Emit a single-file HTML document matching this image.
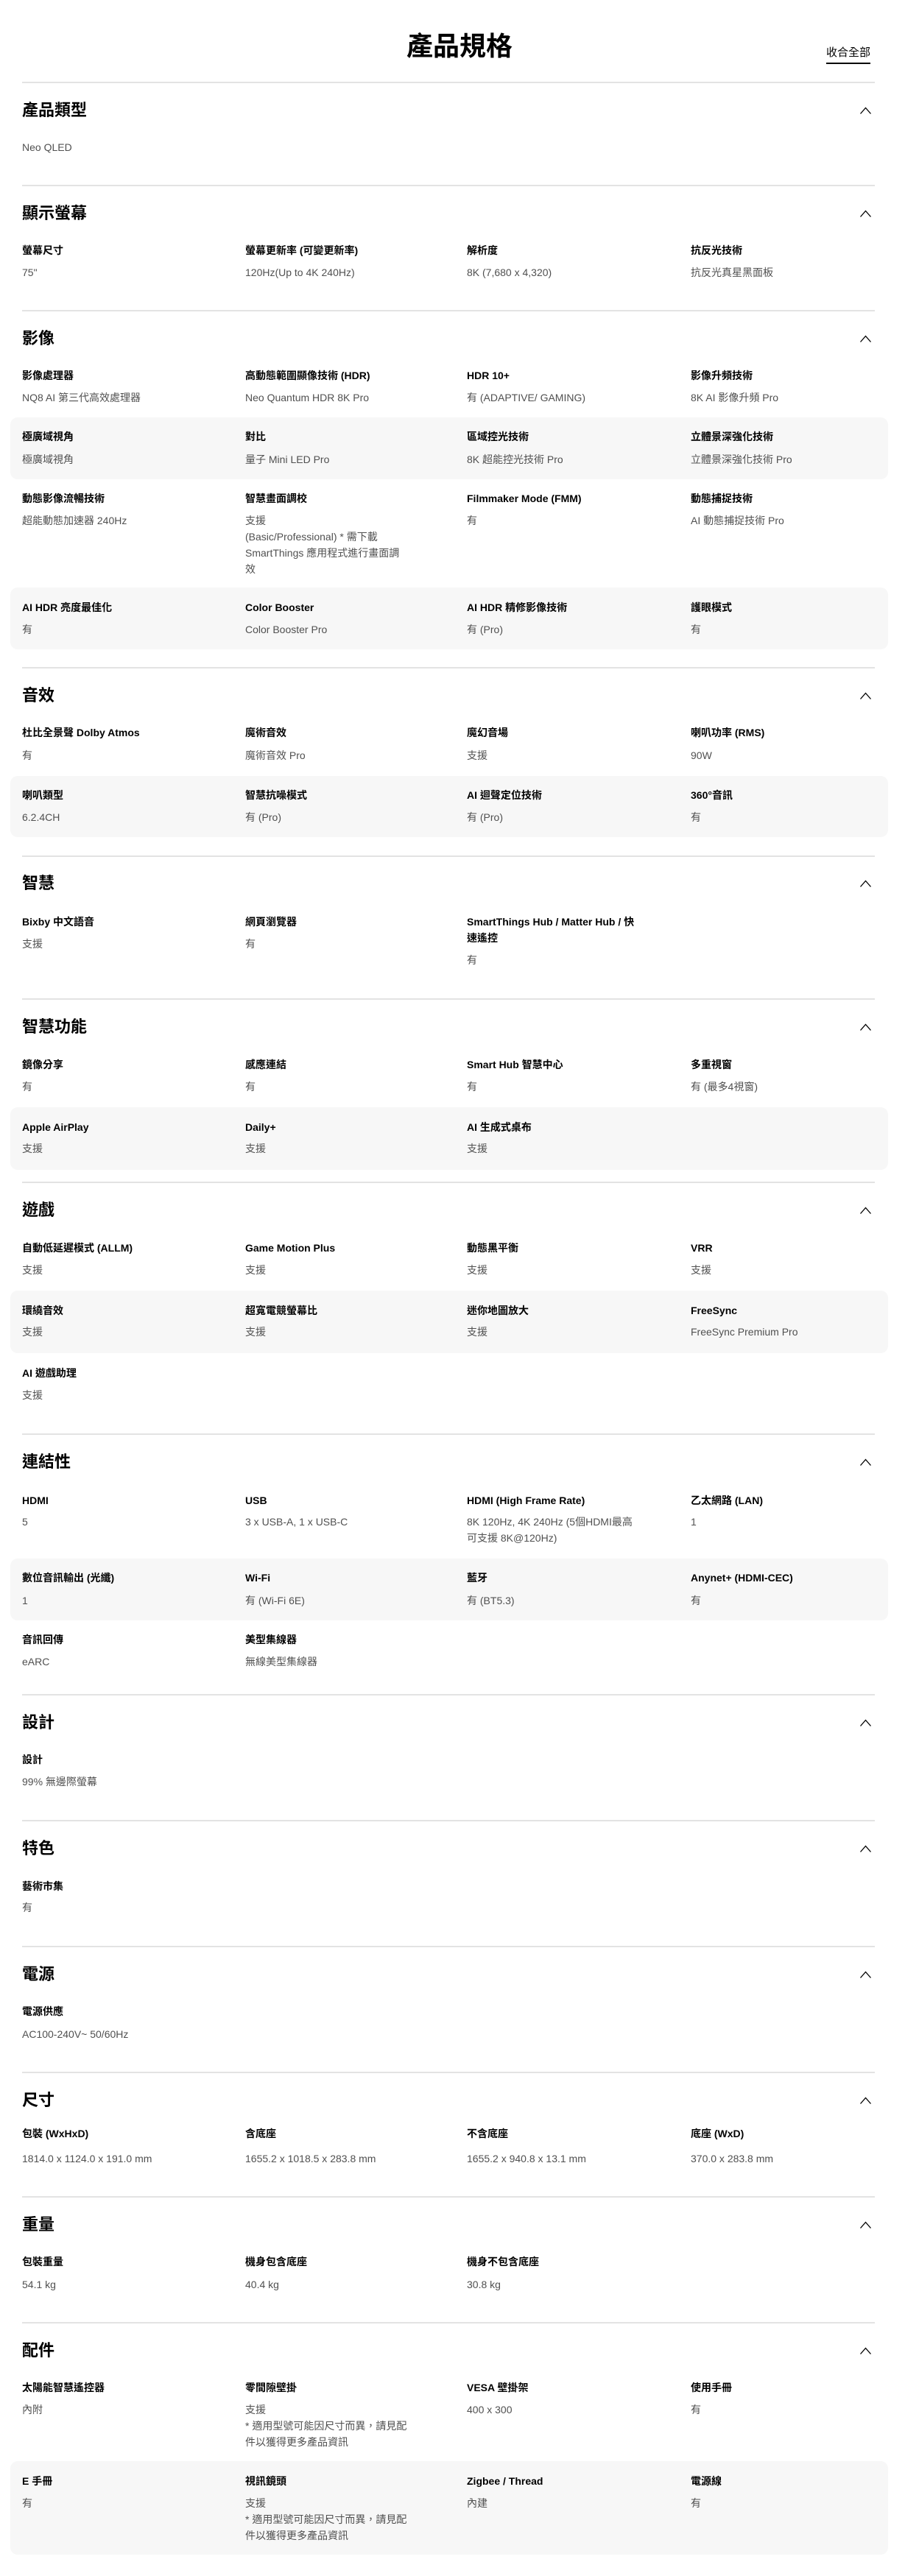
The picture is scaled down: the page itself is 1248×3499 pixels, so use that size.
<!DOCTYPE html>
<html><head><meta charset="utf-8">
<style>
*{margin:0;padding:0;box-sizing:border-box}
html,body{width:1248px;height:3499px;background:#fff;overflow:hidden}
body{position:relative;font-family:"Liberation Sans","Noto Sans CJK TC",sans-serif;color:#000}
div{position:absolute;white-space:nowrap}
.t{left:0;width:1248px;text-align:center;top:40px;font-size:36px;font-weight:700;line-height:46px}
.ca{left:1122px;top:61px;font-size:15px;line-height:22px;border-bottom:2px solid #000;padding-bottom:2px}
.d{left:30px;width:1158px;height:2px;background:#e3e3e3}
.h{left:30px;font-size:22px;font-weight:700;line-height:32px}
.c{left:1167px;width:17px;height:12px}
.g{left:14px;width:1192px;background:#f7f7f7;border-radius:10px}
.l{font-size:14px;font-weight:700;line-height:22px;color:#000}
.v{font-size:14px;line-height:22px;color:#505050}
.x1{left:30px}.x2{left:333px}.x3{left:634px}.x4{left:938px}
</style></head><body>
<div class="t">產品規格</div>
<div class="ca">收合全部</div>

<div class="g" style="top:567px;height:84px"></div>
<div class="g" style="top:798px;height:84px"></div>
<div class="g" style="top:1054px;height:83px"></div>
<div class="g" style="top:1504px;height:85px"></div>
<div class="g" style="top:1753px;height:85px"></div>
<div class="g" style="top:2117px;height:84px"></div>
<div class="g" style="top:3343px;height:127px"></div>

<div class="d" style="top:111px"></div>
<div class="d" style="top:251px"></div>
<div class="d" style="top:421px"></div>
<div class="d" style="top:906px"></div>
<div class="d" style="top:1162px"></div>
<div class="d" style="top:1356px"></div>
<div class="d" style="top:1605px"></div>
<div class="d" style="top:1947px"></div>
<div class="d" style="top:2301px"></div>
<div class="d" style="top:2472px"></div>
<div class="d" style="top:2643px"></div>
<div class="d" style="top:2814px"></div>
<div class="d" style="top:2983px"></div>
<div class="d" style="top:3154px"></div>

<div class="h" style="top:134px">產品類型</div>
<div class="h" style="top:274px">顯示螢幕</div>
<div class="h" style="top:444px">影像</div>
<div class="h" style="top:929px">音效</div>
<div class="h" style="top:1184px">智慧</div>
<div class="h" style="top:1379px">智慧功能</div>
<div class="h" style="top:1628px">遊戲</div>
<div class="h" style="top:1970px">連結性</div>
<div class="h" style="top:2324px">設計</div>
<div class="h" style="top:2495px">特色</div>
<div class="h" style="top:2666px">電源</div>
<div class="h" style="top:2837px">尺寸</div>
<div class="h" style="top:3006px">重量</div>
<div class="h" style="top:3177px">配件</div>

<svg class="c" style="position:absolute;top:144px" viewBox="0 0 17 12"><path d="M1.5 10.5 L8.5 2.5 L15.5 10.5" fill="none" stroke="#000" stroke-width="1.3"/></svg>
<svg class="c" style="position:absolute;top:284px" viewBox="0 0 17 12"><path d="M1.5 10.5 L8.5 2.5 L15.5 10.5" fill="none" stroke="#000" stroke-width="1.3"/></svg>
<svg class="c" style="position:absolute;top:454px" viewBox="0 0 17 12"><path d="M1.5 10.5 L8.5 2.5 L15.5 10.5" fill="none" stroke="#000" stroke-width="1.3"/></svg>
<svg class="c" style="position:absolute;top:939px" viewBox="0 0 17 12"><path d="M1.5 10.5 L8.5 2.5 L15.5 10.5" fill="none" stroke="#000" stroke-width="1.3"/></svg>
<svg class="c" style="position:absolute;top:1194px" viewBox="0 0 17 12"><path d="M1.5 10.5 L8.5 2.5 L15.5 10.5" fill="none" stroke="#000" stroke-width="1.3"/></svg>
<svg class="c" style="position:absolute;top:1389px" viewBox="0 0 17 12"><path d="M1.5 10.5 L8.5 2.5 L15.5 10.5" fill="none" stroke="#000" stroke-width="1.3"/></svg>
<svg class="c" style="position:absolute;top:1638px" viewBox="0 0 17 12"><path d="M1.5 10.5 L8.5 2.5 L15.5 10.5" fill="none" stroke="#000" stroke-width="1.3"/></svg>
<svg class="c" style="position:absolute;top:1980px" viewBox="0 0 17 12"><path d="M1.5 10.5 L8.5 2.5 L15.5 10.5" fill="none" stroke="#000" stroke-width="1.3"/></svg>
<svg class="c" style="position:absolute;top:2334px" viewBox="0 0 17 12"><path d="M1.5 10.5 L8.5 2.5 L15.5 10.5" fill="none" stroke="#000" stroke-width="1.3"/></svg>
<svg class="c" style="position:absolute;top:2505px" viewBox="0 0 17 12"><path d="M1.5 10.5 L8.5 2.5 L15.5 10.5" fill="none" stroke="#000" stroke-width="1.3"/></svg>
<svg class="c" style="position:absolute;top:2676px" viewBox="0 0 17 12"><path d="M1.5 10.5 L8.5 2.5 L15.5 10.5" fill="none" stroke="#000" stroke-width="1.3"/></svg>
<svg class="c" style="position:absolute;top:2847px" viewBox="0 0 17 12"><path d="M1.5 10.5 L8.5 2.5 L15.5 10.5" fill="none" stroke="#000" stroke-width="1.3"/></svg>
<svg class="c" style="position:absolute;top:3016px" viewBox="0 0 17 12"><path d="M1.5 10.5 L8.5 2.5 L15.5 10.5" fill="none" stroke="#000" stroke-width="1.3"/></svg>
<svg class="c" style="position:absolute;top:3187px" viewBox="0 0 17 12"><path d="M1.5 10.5 L8.5 2.5 L15.5 10.5" fill="none" stroke="#000" stroke-width="1.3"/></svg>

<div class="v x1" style="top:189px">Neo QLED</div>

<div class="l x1" style="top:329px">螢幕尺寸</div><div class="v x1" style="top:359px">75"</div>
<div class="l x2" style="top:329px">螢幕更新率 (可變更新率)</div><div class="v x2" style="top:359px">120Hz(Up to 4K 240Hz)</div>
<div class="l x3" style="top:329px">解析度</div><div class="v x3" style="top:359px">8K (7,680 x 4,320)</div>
<div class="l x4" style="top:329px">抗反光技術</div><div class="v x4" style="top:359px">抗反光真星黑面板</div>

<div class="l x1" style="top:499px">影像處理器</div><div class="v x1" style="top:529px">NQ8 AI 第三代高效處理器</div>
<div class="l x2" style="top:499px">高動態範圍顯像技術 (HDR)</div><div class="v x2" style="top:529px">Neo Quantum HDR 8K Pro</div>
<div class="l x3" style="top:499px">HDR 10+</div><div class="v x3" style="top:529px">有 (ADAPTIVE/ GAMING)</div>
<div class="l x4" style="top:499px">影像升頻技術</div><div class="v x4" style="top:529px">8K AI 影像升頻 Pro</div>

<div class="l x1" style="top:582px">極廣域視角</div><div class="v x1" style="top:613px">極廣域視角</div>
<div class="l x2" style="top:582px">對比</div><div class="v x2" style="top:613px">量子 Mini LED Pro</div>
<div class="l x3" style="top:582px">區域控光技術</div><div class="v x3" style="top:613px">8K 超能控光技術 Pro</div>
<div class="l x4" style="top:582px">立體景深強化技術</div><div class="v x4" style="top:613px">立體景深強化技術 Pro</div>

<div class="l x1" style="top:666px">動態影像流暢技術</div><div class="v x1" style="top:696px">超能動態加速器 240Hz</div>
<div class="l x2" style="top:666px">智慧畫面調校</div><div class="v x2" style="top:696px">支援<br>(Basic/Professional) * 需下載<br>SmartThings 應用程式進行畫面調<br>效</div>
<div class="l x3" style="top:666px">Filmmaker Mode (FMM)</div><div class="v x3" style="top:696px">有</div>
<div class="l x4" style="top:666px">動態捕捉技術</div><div class="v x4" style="top:696px">AI 動態捕捉技術 Pro</div>

<div class="l x1" style="top:814px">AI HDR 亮度最佳化</div><div class="v x1" style="top:844px">有</div>
<div class="l x2" style="top:814px">Color Booster</div><div class="v x2" style="top:844px">Color Booster Pro</div>
<div class="l x3" style="top:814px">AI HDR 精修影像技術</div><div class="v x3" style="top:844px">有 (Pro)</div>
<div class="l x4" style="top:814px">護眼模式</div><div class="v x4" style="top:844px">有</div>

<div class="l x1" style="top:984px">杜比全景聲 Dolby Atmos</div><div class="v x1" style="top:1015px">有</div>
<div class="l x2" style="top:984px">魔術音效</div><div class="v x2" style="top:1015px">魔術音效 Pro</div>
<div class="l x3" style="top:984px">魔幻音場</div><div class="v x3" style="top:1015px">支援</div>
<div class="l x4" style="top:984px">喇叭功率 (RMS)</div><div class="v x4" style="top:1015px">90W</div>

<div class="l x1" style="top:1069px">喇叭類型</div><div class="v x1" style="top:1099px">6.2.4CH</div>
<div class="l x2" style="top:1069px">智慧抗噪模式</div><div class="v x2" style="top:1099px">有 (Pro)</div>
<div class="l x3" style="top:1069px">AI 迴聲定位技術</div><div class="v x3" style="top:1099px">有 (Pro)</div>
<div class="l x4" style="top:1069px">360°音訊</div><div class="v x4" style="top:1099px">有</div>

<div class="l x1" style="top:1241px">Bixby 中文語音</div><div class="v x1" style="top:1271px">支援</div>
<div class="l x2" style="top:1241px">網頁瀏覽器</div><div class="v x2" style="top:1271px">有</div>
<div class="l x3" style="top:1241px">SmartThings Hub / Matter Hub / 快<br>速遙控</div><div class="v x3" style="top:1293px">有</div>

<div class="l x1" style="top:1435px">鏡像分享</div><div class="v x1" style="top:1465px">有</div>
<div class="l x2" style="top:1435px">感應連結</div><div class="v x2" style="top:1465px">有</div>
<div class="l x3" style="top:1435px">Smart Hub 智慧中心</div><div class="v x3" style="top:1465px">有</div>
<div class="l x4" style="top:1435px">多重視窗</div><div class="v x4" style="top:1465px">有 (最多4視窗)</div>

<div class="l x1" style="top:1520px">Apple AirPlay</div><div class="v x1" style="top:1549px">支援</div>
<div class="l x2" style="top:1520px">Daily+</div><div class="v x2" style="top:1549px">支援</div>
<div class="l x3" style="top:1520px">AI 生成式桌布</div><div class="v x3" style="top:1549px">支援</div>

<div class="l x1" style="top:1684px">自動低延遲模式 (ALLM)</div><div class="v x1" style="top:1714px">支援</div>
<div class="l x2" style="top:1684px">Game Motion Plus</div><div class="v x2" style="top:1714px">支援</div>
<div class="l x3" style="top:1684px">動態黑平衡</div><div class="v x3" style="top:1714px">支援</div>
<div class="l x4" style="top:1684px">VRR</div><div class="v x4" style="top:1714px">支援</div>

<div class="l x1" style="top:1769px">環繞音效</div><div class="v x1" style="top:1798px">支援</div>
<div class="l x2" style="top:1769px">超寬電競螢幕比</div><div class="v x2" style="top:1798px">支援</div>
<div class="l x3" style="top:1769px">迷你地圖放大</div><div class="v x3" style="top:1798px">支援</div>
<div class="l x4" style="top:1769px">FreeSync</div><div class="v x4" style="top:1798px">FreeSync Premium Pro</div>

<div class="l x1" style="top:1854px">AI 遊戲助理</div><div class="v x1" style="top:1884px">支援</div>

<div class="l x1" style="top:2027px">HDMI</div><div class="v x1" style="top:2056px">5</div>
<div class="l x2" style="top:2027px">USB</div><div class="v x2" style="top:2056px">3 x USB-A, 1 x USB-C</div>
<div class="l x3" style="top:2027px">HDMI (High Frame Rate)</div><div class="v x3" style="top:2056px">8K 120Hz, 4K 240Hz (5個HDMI最高<br>可支援 8K@120Hz)</div>
<div class="l x4" style="top:2027px">乙太網路 (LAN)</div><div class="v x4" style="top:2056px">1</div>

<div class="l x1" style="top:2132px">數位音訊輸出 (光纖)</div><div class="v x1" style="top:2163px">1</div>
<div class="l x2" style="top:2132px">Wi-Fi</div><div class="v x2" style="top:2163px">有 (Wi-Fi 6E)</div>
<div class="l x3" style="top:2132px">藍牙</div><div class="v x3" style="top:2163px">有 (BT5.3)</div>
<div class="l x4" style="top:2132px">Anynet+ (HDMI-CEC)</div><div class="v x4" style="top:2163px">有</div>

<div class="l x1" style="top:2216px">音訊回傳</div><div class="v x1" style="top:2246px">eARC</div>
<div class="l x2" style="top:2216px">美型集線器</div><div class="v x2" style="top:2246px">無線美型集線器</div>

<div class="l x1" style="top:2379px">設計</div><div class="v x1" style="top:2409px">99% 無邊際螢幕</div>
<div class="l x1" style="top:2551px">藝術市集</div><div class="v x1" style="top:2580px">有</div>
<div class="l x1" style="top:2721px">電源供應</div><div class="v x1" style="top:2752px">AC100-240V~ 50/60Hz</div>

<div class="l x1" style="top:2887px">包裝 (WxHxD)</div><div class="v x1" style="top:2921px">1814.0 x 1124.0 x 191.0 mm</div>
<div class="l x2" style="top:2887px">含底座</div><div class="v x2" style="top:2921px">1655.2 x 1018.5 x 283.8 mm</div>
<div class="l x3" style="top:2887px">不含底座</div><div class="v x3" style="top:2921px">1655.2 x 940.8 x 13.1 mm</div>
<div class="l x4" style="top:2887px">底座 (WxD)</div><div class="v x4" style="top:2921px">370.0 x 283.8 mm</div>

<div class="l x1" style="top:3061px">包裝重量</div><div class="v x1" style="top:3092px">54.1 kg</div>
<div class="l x2" style="top:3061px">機身包含底座</div><div class="v x2" style="top:3092px">40.4 kg</div>
<div class="l x3" style="top:3061px">機身不包含底座</div><div class="v x3" style="top:3092px">30.8 kg</div>

<div class="l x1" style="top:3232px">太陽能智慧遙控器</div><div class="v x1" style="top:3262px">內附</div>
<div class="l x2" style="top:3232px">零間隙壁掛</div><div class="v x2" style="top:3262px">支援<br>* 適用型號可能因尺寸而異，請見配<br>件以獲得更多產品資訊</div>
<div class="l x3" style="top:3232px">VESA 壁掛架</div><div class="v x3" style="top:3262px">400 x 300</div>
<div class="l x4" style="top:3232px">使用手冊</div><div class="v x4" style="top:3262px">有</div>

<div class="l x1" style="top:3359px">E 手冊</div><div class="v x1" style="top:3389px">有</div>
<div class="l x2" style="top:3359px">視訊鏡頭</div><div class="v x2" style="top:3389px">支援<br>* 適用型號可能因尺寸而異，請見配<br>件以獲得更多產品資訊</div>
<div class="l x3" style="top:3359px">Zigbee / Thread</div><div class="v x3" style="top:3389px">內建</div>
<div class="l x4" style="top:3359px">電源線</div><div class="v x4" style="top:3389px">有</div>
</body></html>
